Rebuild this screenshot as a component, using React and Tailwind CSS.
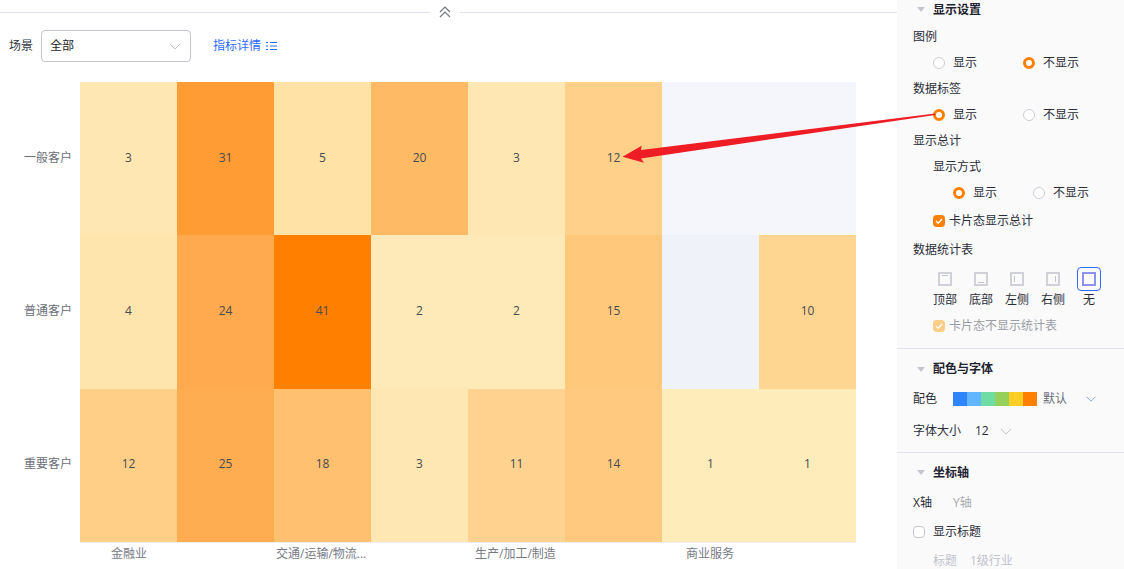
const FONT = { fontFamily: '"Open Sans","Noto Sans CJK SC",sans-serif' };

const ROWS = [
  {
    label: '一般客户',
    cells: [
      { v: 3, c: 'bg-[#fee7b2]' },
      { v: 31, c: 'bg-[#ff9c33]' },
      { v: 5, c: 'bg-[#fee2a6]' },
      { v: 20, c: 'bg-[#ffba66]' },
      { v: 3, c: 'bg-[#fee7b2]' },
      { v: 12, c: 'bg-[#ffd089]' },
      { v: '', c: 'bg-[#f5f6fb]' },
      { v: '', c: 'bg-[#f5f6fb]' },
    ],
  },
  {
    label: '普通客户',
    cells: [
      { v: 4, c: 'bg-[#fee5ae]' },
      { v: 24, c: 'bg-[#ffaa4e]' },
      { v: 41, c: 'bg-[#ff8000]' },
      { v: 2, c: 'bg-[#feeab8]' },
      { v: 2, c: 'bg-[#feeab8]' },
      { v: 15, c: 'bg-[#ffc87a]' },
      { v: '', c: 'bg-[#eff2f9]' },
      { v: 10, c: 'bg-[#ffd592]' },
    ],
  },
  {
    label: '重要客户',
    cells: [
      { v: 12, c: 'bg-[#ffcf88]' },
      { v: 25, c: 'bg-[#ffad50]' },
      { v: 18, c: 'bg-[#ffc070]' },
      { v: 3, c: 'bg-[#fee7b2]' },
      { v: 11, c: 'bg-[#ffd38f]' },
      { v: 14, c: 'bg-[#ffca7f]' },
      { v: 1, c: 'bg-[#feedbb]' },
      { v: 1, c: 'bg-[#feedbb]' },
    ],
  },
];

const Chevron = ({ className }) => (
  <svg width="14" height="8" viewBox="0 0 14 8" fill="none" stroke="currentColor" strokeWidth="1" className={className}>
    <path d="M1 1l6 6 6-6" />
  </svg>
);

const Radio = ({ on, label, className }) => (
  <div className={`flex items-center gap-2 ${className}`}>
    {on ? (
      <span className="w-3 h-3 rounded-full border-[3px] border-[#ff8000] bg-white" />
    ) : (
      <span className="w-3 h-3 rounded-full border border-[#ccced6] bg-white" />
    )}
    <span>{label}</span>
  </div>
);

const Check = ({ faded }) => (
  <span className={`w-3 h-3 rounded-sm flex items-center justify-center ${faded ? 'bg-[#ffcd85]' : 'bg-[#ff8000]'}`}>
    <svg width="10" height="10" viewBox="0 0 10 10" fill="none" stroke="white" strokeWidth="1.4">
      <path d="M2 5l2.2 2.2L8 3" />
    </svg>
  </span>
);

const SectionTitle = ({ children, className }) => (
  <div className={`flex items-center pl-[20px] font-bold text-[#1f2330] ${className}`}>
    <span className="w-0 h-0 border-x-[4px] border-x-transparent border-t-[5px] border-t-[#c4c6cf]" />
    <span className="ml-[8px]">{children}</span>
  </div>
);

const PosIcon = ({ line }) => (
  <span className="w-[14px] h-[14px] border-2 border-[#d0d1d8] relative block">{line}</span>
);

const POSITIONS = [
  { label: '顶部', line: <span className="absolute left-[2px] top-[1px] w-[6px] h-px bg-[#c4c5cd]" /> },
  { label: '底部', line: <span className="absolute left-[2px] bottom-[1px] w-[6px] h-px bg-[#c4c5cd]" /> },
  { label: '左侧', line: <span className="absolute left-[2px] top-[2px] w-px h-[6px] bg-[#c4c5cd]" /> },
  { label: '右侧', line: <span className="absolute right-[2px] top-[2px] w-px h-[6px] bg-[#c4c5cd]" /> },
];

const PALETTE = ['bg-[#2f84ff]', 'bg-[#62b5ff]', 'bg-[#6fdca3]', 'bg-[#95d05a]', 'bg-[#ffce25]', 'bg-[#ff8000]'];

const Row = ({ className, children }) => <div className={`flex items-center ${className}`}>{children}</div>;

const SidePanel = () => (
  <aside className="w-[227px] h-full bg-[#fafafb] text-xs text-[#2a2d38] overflow-hidden shrink-0">
    <SectionTitle className="h-[19px]">显示设置</SectionTitle>
    <Row className="h-[26px] mt-[5px] pl-[16px]">图例</Row>
    <Row className="h-[26px] pl-[36px]">
      <Radio label="显示" className="w-[90px]" />
      <Radio on label="不显示" />
    </Row>
    <Row className="h-[26px] pl-[16px]">数据标签</Row>
    <Row className="h-[26px] pl-[36px]">
      <Radio on label="显示" className="w-[90px]" />
      <Radio label="不显示" />
    </Row>
    <Row className="h-[26px] pl-[16px]">显示总计</Row>
    <Row className="h-[26px] pl-[36px]">显示方式</Row>
    <Row className="h-[26px] pl-[56px]">
      <Radio on label="显示" className="w-[80px]" />
      <Radio label="不显示" />
    </Row>
    <Row className="h-[30px] pl-[36px] gap-1">
      <Check />
      卡片态显示总计
    </Row>
    <Row className="h-[28px] pl-[16px]">数据统计表</Row>
    <div className="flex pl-[30px] mt-[3px] h-[43px]">
      {POSITIONS.map((p) => (
        <div key={p.label} className="w-[36px] flex flex-col items-center">
          <div className="h-[24px] flex items-center">
            <PosIcon line={p.line} />
          </div>
          <span className="mt-[1px]">{p.label}</span>
        </div>
      ))}
      <div className="w-[36px] flex flex-col items-center">
        <div className="w-[24px] h-[24px] rounded-sm border border-[#2f6bff] flex items-center justify-center">
          <span className="w-[14px] h-[14px] border-2 border-[#8f92f0]" />
        </div>
        <span className="mt-[1px]">无</span>
      </div>
    </div>
    <Row className="h-[26px] mt-[3px] pl-[36px] gap-1 text-[#9a9ca6]">
      <Check faded />
      卡片态不显示统计表
    </Row>
    <div className="h-[10px] border-b border-[#e2e2ea]" />
    <SectionTitle className="h-[38px] mt-[1px]">配色与字体</SectionTitle>
    <Row className="h-[22px] pl-[16px]">
      <span className="w-[40px]">配色</span>
      <div className="flex">
        {PALETTE.map((c) => (
          <span key={c} className={`w-[14px] h-[14px] ${c}`} />
        ))}
      </div>
      <span className="ml-[6px] text-[#6b6e7a]">默认</span>
      <Chevron className="ml-[19px] text-[#5b8ad6] w-[10px] h-[6px]" />
    </Row>
    <Row className="h-[42px] pl-[16px]">
      <span className="w-[62px]">字体大小</span>
      <span>12</span>
      <Chevron className="ml-[11px] text-[#b8bac4] w-[12px] h-[7px]" />
    </Row>
    <div className="border-b border-[#e2e2ea]" />
    <SectionTitle className="h-[39px]">坐标轴</SectionTitle>
    <Row className="h-[22px] pl-[16px]">
      <span className="w-[40px]">X轴</span>
      <span className="text-[#a8aab4]">Y轴</span>
    </Row>
    <Row className="h-[36px] pl-[16px]">
      <span className="w-3 h-3 rounded-sm border border-[#c4c6cf] bg-white" />
      <span className="ml-2">显示标题</span>
    </Row>
    <Row className="h-[22px] pl-[36px] text-[#c0c2ca]">
      <span className="w-[37px]">标题</span>
      <span>1级行业</span>
    </Row>
  </aside>
);

const Heatmap = () => (
  <div className="flex flex-col mt-[20px]">
    {ROWS.map((row) => (
      <div key={row.label} className="flex h-[153.33px] items-stretch">
        <div className="w-[72px] mr-[8px] pb-[2px] flex items-center justify-end text-xs text-[#6b6e7a]">{row.label}</div>
        <div className="grid grid-cols-8 w-[776px]">
          {row.cells.map((cell, i) => (
            <div key={i} className={`flex items-center justify-center pb-[2px] text-xs text-[#4a4a4f] ${cell.c}`}>
              {cell.v}
            </div>
          ))}
        </div>
      </div>
    ))}
    <div className="ml-[80px] w-[776px] h-px bg-[#eeeeee]" />
    <div className="ml-[80px] w-[776px] grid grid-cols-4 text-xs text-[#777a85] mt-[3px]">
      <span className="pl-[31px]">金融业</span>
      <span className="pl-[2px]">交通/运输/物流...</span>
      <span className="pl-[7px]">生产/加工/制造</span>
      <span className="pl-[24px]">商业服务</span>
    </div>
  </div>
);

const App = () => (
  <div className="relative w-[1124px] h-[569px] flex bg-white overflow-hidden" style={FONT}>
    <main className="w-[897px] shrink-0">
      <div className="flex items-center h-[24px]">
        <div className="w-[430px] h-px bg-[#e2e2ea]" />
        <div className="w-[30px] flex justify-center text-[#6f7685]">
          <svg width="12" height="12" viewBox="0 0 12 12" fill="none" stroke="currentColor" strokeWidth="1.2">
            <path d="M1 6l5-5 5 5M1 11l5-5 5 5" />
          </svg>
        </div>
        <div className="flex-1 h-px bg-[#e2e2ea]" />
      </div>
      <div className="flex items-center h-[32px] mt-[6px] pl-[9px] text-xs">
        <span className="text-[#33363f]">场景</span>
        <div className="ml-[8px] w-[150px] h-[32px] rounded border border-[#c4c6d0] flex items-center justify-between pl-[8px] pr-[9px] text-[#22242c]">
          全部
          <Chevron className="text-[#b8bac4] w-[12px] h-[7px]" />
        </div>
        <span className="ml-[22px] text-[#2f6bff]">指标详情</span>
        <svg width="12" height="10" viewBox="0 0 12 10" className="ml-[5px] text-[#2f6bff]" fill="none" stroke="currentColor">
          <path d="M0 1.5h2M0 5h2M0 8.5h2M4 1.5h7M4 5h7M4 8.5h7" />
        </svg>
      </div>
      <Heatmap />
    </main>
    <SidePanel />
    {/* red callout arrow on top of the chart and panel */}
    <svg className="absolute left-0 top-0 pointer-events-none" width="1124" height="569" viewBox="0 0 1124 569">
      <polygon fill="#ee1c25" points="935,113.5 935,115 641,158.5 644,162.7 622.5,156.7 641.7,145.7 641,150" />
    </svg>
  </div>
);

export default App;
